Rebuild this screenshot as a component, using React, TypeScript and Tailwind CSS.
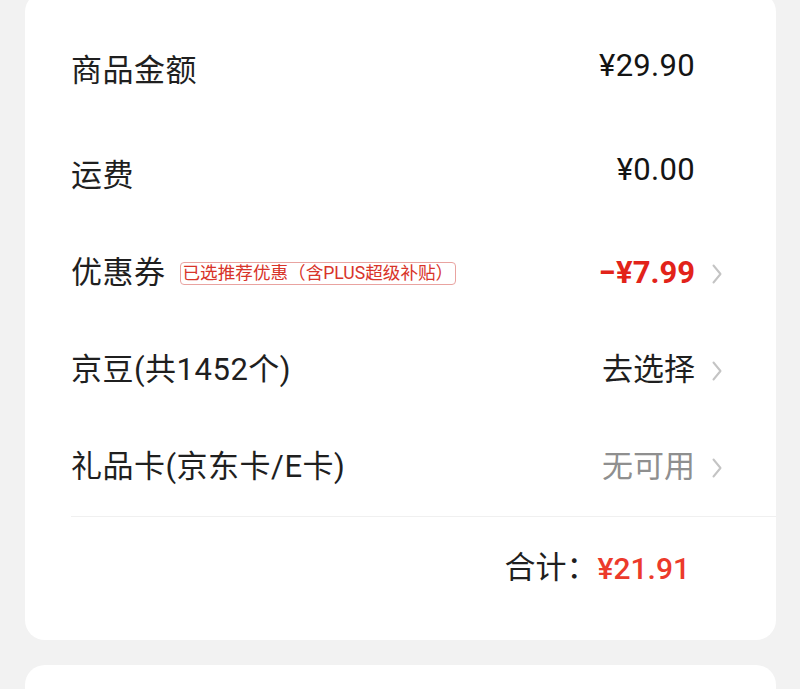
const font = "font-['Roboto','Noto_Sans_CJK_SC',sans-serif]";

function Chevron() {
  return (
    <svg width="10" height="20" viewBox="0 0 10 20" fill="none">
      <polyline points="1.5,1.5 8.5,10 1.5,18.5" stroke="#c4c4c4" strokeWidth="2" strokeLinejoin="round" strokeLinecap="round" />
    </svg>
  );
}

interface RowProps {
  label: React.ReactNode;
  value: React.ReactNode;
  arrow?: boolean;
  className?: string;
}

function Row({ label, value, arrow, className }: RowProps) {
  return (
    <div className={`flex items-center h-[97px] pr-[54px] ${className ?? ''}`}>
      <div className="flex-1 flex items-center text-[31px] tracking-[0.5px] text-[#1f1f1f]">{label}</div>
      <div className="flex items-center">{value}</div>
      <div className="w-[27px] flex justify-end">{arrow && <Chevron />}</div>
    </div>
  );
}

export default function App() {
  return (
    <div className={`min-h-[689px] h-[689px] overflow-hidden bg-[#f2f2f2] ${font}`}>
      <div className="ml-[25px] mr-[24px] -mt-2 bg-white rounded-[20px] pt-[31px] pb-[21px]">
        <div className="pl-[46px]">
          <Row
            className="mb-2"
            label="商品金额"
            value={<span className="text-[31px] text-[#141414] tracking-[0.3px] -translate-y-[5px]">¥29.90</span>}
          />
          <Row
            label="运费"
            value={<span className="text-[31px] text-[#141414] tracking-[0.3px] -translate-y-[6px]">¥0.00</span>}
          />
          <Row
            label={
              <>
                <span>优惠券</span>
                <span className="ml-[14px] h-[23px] px-[2px] flex items-center border border-[#e9a3a0] rounded-[4px] text-[17.6px] tracking-normal text-[#d8342a] leading-none">
                  已选推荐优惠（含PLUS超级补贴）
                </span>
              </>
            }
            value={<span className="text-[31px] font-bold text-[#e2231a]">−¥7.99</span>}
            arrow
          />
          <Row
            label="京豆(共1452个)"
            value={<span className="text-[31px] text-[#1f1f1f]">去选择</span>}
            arrow
          />
          <Row
            label="礼品卡(京东卡/E卡)"
            value={<span className="text-[31px] text-[#8f8f8f]">无可用</span>}
            arrow
          />
          <div className="h-px bg-[#f0f0f0]" />
        </div>
        <div className="flex items-center justify-end h-[102px] pr-[86px]">
          <span className="text-[31px] text-[#1f1f1f]">合计：</span>
          <span className="text-[30px] font-medium text-[#ec3a2b]">¥21.91</span>
        </div>
      </div>
      <div className="ml-[25px] mr-[24px] mt-[25px] h-[100px] bg-white rounded-[20px]" />
    </div>
  );
}
